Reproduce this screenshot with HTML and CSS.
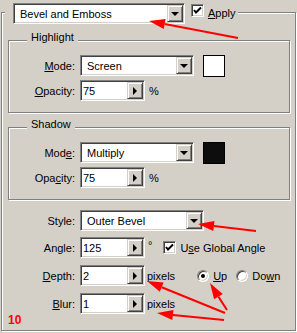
FILE: index.html
```html
<!DOCTYPE html>
<html lang="en">
<head>
    <meta charset="UTF-8">
    <meta name="viewport" content="width=device-width, initial-scale=1.0">
    <title>Bevel and Emboss</title>
    <link rel="stylesheet" href="styles.css">
</head>
<body>
    <fieldset class="frame">
        <legend class="frame-head">
            <div class="combo combo-effect">
                <span class="combo-text">Bevel and Emboss</span>
                <span class="drop-btn"><span class="tri-down"></span></span>
            </div>
            <span class="checkbox head-check">
                <svg width="9" height="9" viewBox="0 0 9 9"><polyline points="1,4 3,6.5 8,1.5" fill="none" stroke="#000" stroke-width="2"/></svg>
            </span>
            <span class="head-label"><u>A</u>pply</span>
        </legend>

        <fieldset class="group">
            <legend>Highlight</legend>
            <div class="row">
                <span class="lbl"><u>M</u>ode:</span>
                <div class="combo combo-mode">
                    <span class="combo-text">Screen</span>
                    <span class="drop-btn"><span class="tri-down"></span></span>
                </div>
                <span class="swatch swatch-white"></span>
            </div>
            <div class="row">
                <span class="lbl"><u>O</u>pacity:</span>
                <div class="spin">
                    <span class="spin-text">75</span>
                    <span class="spin-btn"><span class="tri-right"></span></span>
                </div>
                <span class="unit unit-pct">%</span>
            </div>
        </fieldset>

        <fieldset class="group group-shadow">
            <legend>Shadow</legend>
            <div class="row">
                <span class="lbl">Mod<u>e</u>:</span>
                <div class="combo combo-mode">
                    <span class="combo-text">Multiply</span>
                    <span class="drop-btn"><span class="tri-down"></span></span>
                </div>
                <span class="swatch swatch-black"></span>
            </div>
            <div class="row">
                <span class="lbl">Opa<u>c</u>ity:</span>
                <div class="spin">
                    <span class="spin-text">75</span>
                    <span class="spin-btn"><span class="tri-right"></span></span>
                </div>
                <span class="unit unit-pct">%</span>
            </div>
        </fieldset>

        <div class="settings">
            <div class="row row-style">
                <span class="lbl">Style:</span>
                <div class="combo combo-style">
                    <span class="combo-text">Outer Bevel</span>
                    <span class="drop-btn"><span class="tri-down"></span></span>
                </div>
            </div>
            <div class="row">
                <span class="lbl">Angle:</span>
                <div class="spin">
                    <span class="spin-text">125</span>
                    <span class="spin-btn"><span class="tri-right"></span></span>
                </div>
                <span class="unit unit-deg">°</span>
                <span class="checkbox global-check">
                    <svg width="9" height="9" viewBox="0 0 9 9"><polyline points="1,4 3,6.5 8,1.5" fill="none" stroke="#000" stroke-width="2"/></svg>
                </span>
                <span class="check-label">U<u>s</u>e Global Angle</span>
            </div>
            <div class="row">
                <span class="lbl"><u>D</u>epth:</span>
                <div class="spin">
                    <span class="spin-text">2</span>
                    <span class="spin-btn"><span class="tri-right"></span></span>
                </div>
                <span class="unit">pixels</span>
                <span class="radio radio-up checked"></span>
                <span class="radio-label"><u>U</u>p</span>
                <span class="radio radio-down"></span>
                <span class="radio-label">Do<u>w</u>n</span>
            </div>
            <div class="row">
                <span class="lbl"><u>B</u>lur:</span>
                <div class="spin">
                    <span class="spin-text">1</span>
                    <span class="spin-btn"><span class="tri-right"></span></span>
                </div>
                <span class="unit">pixels</span>
            </div>
            <div class="step">10</div>
        </div>
    </fieldset>

    <!-- annotation arrows drawn over the dialog -->
    <svg class="arrows" width="297" height="333" viewBox="0 0 297 333">
        <g stroke="#f00" stroke-width="2" fill="none">
            <line x1="238" y1="38" x2="164.7" y2="24"/>
            <line x1="256" y1="231" x2="213.9" y2="225.9"/>
            <line x1="225" y1="313" x2="161.7" y2="287.2"/>
            <line x1="224" y1="320" x2="172.9" y2="315"/>
            <line x1="227" y1="310" x2="218.4" y2="296.6"/>
        </g>
        <g fill="#f00">
            <polygon points="149,21 165.6,19.1 163.8,28.9"/>
            <polygon points="198,224 214.5,220.9 213.3,230.9"/>
            <polygon points="147,281 163.6,282.6 159.8,291.8"/>
            <polygon points="157,313 173.5,310 172.3,320"/>
            <polygon points="210,283 222.7,294 214.1,299.2"/>
        </g>
    </svg>
</body>
</html>
```

FILE: styles.css
```css
body {
    margin: 0;
    width: 297px;
    height: 333px;
    position: relative;
    overflow: hidden;
    background: #d4d0c8;
    font-family: "Liberation Sans", Arial, sans-serif;
    font-size: 11px;
    color: #000;
}

/* etched group boxes */
.frame,
.group {
    margin: 0;
    min-width: 0;
    border: 1px solid #808080;
    box-shadow: inset 1px 1px 0 #fff, 1px 1px 0 #fff;
}

.frame {
    width: 295px;
    box-sizing: border-box;
    margin: 3px 0 0 1px;
    padding: 9px 5px 4px 6px;
}

.frame-head {
    display: flex;
    align-items: flex-start;
    height: 19px;
    margin-left: -3px;
    padding: 0 2px 0 8px;
    background: #d4d0c8;
}

.head-check {
    margin: 1px 0 0 6px;
}

.head-label {
    margin: 4px 0 0 4px;
    line-height: 13px;
}

.group {
    padding: 5px 0 11px 0;
}

.group-shadow {
    margin-top: 5px;
}

.group legend {
    margin-left: 18px;
    padding: 0 4px 6px;
    line-height: 13px;
    background: #d4d0c8;
}

/* rows */
.row {
    display: flex;
    align-items: center;
    height: 21px;
}

.row + .row {
    margin-top: 4px;
}

.lbl {
    width: 66px;
    margin-right: 5px;
    text-align: right;
    white-space: nowrap;
}

.settings {
    margin-top: 10px;
}

.settings .lbl {
    width: 67px;
}

.settings .row + .row {
    margin-top: 7px;
}

.settings .row-style + .row {
    margin-top: 6px;
}

/* sunken fields */
.combo,
.spin {
    display: flex;
    box-sizing: border-box;
    height: 21px;
    background: #fff;
    border: 1px solid;
    border-color: #808080 #fff #fff #808080;
    box-shadow: inset 1px 1px 0 #404040, inset -1px -1px 0 #d4d0c8;
    padding: 1px;
    flex-shrink: 0;
}

.combo-effect { width: 172px; }
.combo-mode { width: 114px; }
.combo-style { width: 124px; }
.spin { width: 65px; }

.combo-text,
.spin-text {
    flex: 1;
    align-self: center;
    white-space: nowrap;
    overflow: hidden;
}

.combo-text { padding-left: 5px; }
.spin-text { padding-left: 1px; }

.drop-btn,
.spin-btn {
    display: flex;
    align-items: center;
    justify-content: center;
    box-sizing: border-box;
    width: 16px;
    height: 17px;
    background: #d4d0c8;
    border: 1px solid;
    border-color: #d4d0c8 #404040 #404040 #d4d0c8;
    box-shadow: inset 1px 1px 0 #fff, inset -1px -1px 0 #808080;
}

.tri-down {
    width: 0;
    height: 0;
    border-top: 4px solid #000;
    border-left: 4px solid transparent;
    border-right: 4px solid transparent;
}

.tri-right {
    width: 0;
    height: 0;
    border-left: 4px solid #000;
    border-top: 4px solid transparent;
    border-bottom: 4px solid transparent;
}

.swatch {
    box-sizing: border-box;
    width: 22px;
    height: 22px;
    margin-left: 9px;
    border: 1px solid #000;
}

.swatch-white { background: #fff; }
.swatch-black { background: #0d0d0d; }

.unit {
    margin-left: 2px;
}

.unit-pct {
    margin-left: 4px;
}

.unit-deg {
    margin-left: 3px;
    align-self: flex-start;
    margin-top: 2px;
}

.checkbox {
    display: flex;
    align-items: center;
    justify-content: center;
    box-sizing: border-box;
    width: 13px;
    height: 13px;
    background: #fff;
    border: 1px solid;
    border-color: #808080 #fff #fff #808080;
    box-shadow: inset 1px 1px 0 #404040, inset -1px -1px 0 #d4d0c8;
    flex-shrink: 0;
}

.global-check {
    margin-left: 11px;
}

.check-label {
    margin-left: 4px;
    white-space: nowrap;
}

.radio {
    position: relative;
    box-sizing: border-box;
    width: 12px;
    height: 12px;
    border-radius: 50%;
    background: #fff;
    border: 1px solid;
    border-color: #808080 #fff #fff #808080;
    box-shadow: inset 1px 1px 0 #404040, inset -1px -1px 0 #d4d0c8;
    flex-shrink: 0;
}

.radio.checked::after {
    content: "";
    position: absolute;
    left: 3px;
    top: 3px;
    width: 4px;
    height: 4px;
    border-radius: 50%;
    background: #000;
}

.radio-up {
    margin-left: 22px;
}

.radio-down {
    margin-left: 9px;
}

.radio-label {
    margin-left: 4px;
}

.step {
    line-height: 12px;
    padding-left: 0;
    color: #f00;
    font-weight: bold;
    font-size: 12px;
}

.arrows {
    position: absolute;
    left: 0;
    top: 0;
    pointer-events: none;
}
```
